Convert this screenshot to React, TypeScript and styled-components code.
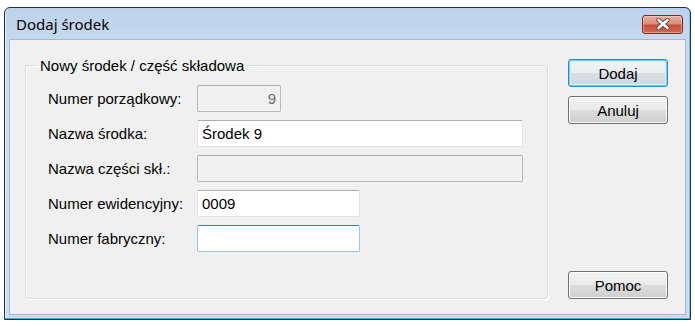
import React from 'react';
import styled, { createGlobalStyle, css } from 'styled-components';

const Global = createGlobalStyle`
  html, body { margin: 0; padding: 0; background: #ffffff; }
  body { font-family: "Liberation Sans", Arial, sans-serif; }
  * { box-sizing: border-box; }
`;

const Page = styled.div`
  width: 695px;
  height: 326px;
  padding: 7px 0 0 4px;
`;

const Window = styled.div`
  width: 687px;
  height: 313px;
  border: 1px solid #26303a;
  border-radius: 6px 6px 0 0;
  background: linear-gradient(#bcd2ec, #c8dbf0 40px, #c9dcf1);
  box-shadow: inset 0 -1px 0 #4aa6e3, inset -1px 0 0 #7fc0ea, inset 1px 0 0 #e4eefa;
  padding: 0 4px 4px;
  display: flex;
  flex-direction: column;
`;

const TitleBar = styled.div`
  height: 31px;
  display: flex;
  align-items: center;
  padding: 0 3px 0 7px;
`;

const Title = styled.div`
  flex: 1;
  font-family: "Noto Sans", "Open Sans", sans-serif;
  font-size: 15px;
  color: #000;
  padding-top: 1px;
`;

const CloseButton = styled.button`
  width: 41px;
  height: 19px;
  margin-top: 1px;
  padding: 0;
  border: 1px solid #7c2a20;
  border-radius: 3px;
  background: linear-gradient(#eab0a3 0%, #dc8e7c 45%, #c9503c 55%, #cf6a52 100%);
  box-shadow: inset 0 0 0 1px rgba(255, 220, 210, 0.45);
  display: flex;
  align-items: center;
  justify-content: center;
`;

const Content = styled.div`
  flex: 1;
  background: #f0f0f0;
  border: 1px solid #a4b9d2;
  padding: 19px 16px 15px 15px;
  display: flex;
  gap: 20px;
`;

const Group = styled.fieldset`
  width: 523px;
  margin: -2px 0 0 0;
  padding: 0;
  border: 1px solid #d5dfe5;
  border-radius: 3px;
  box-shadow: inset 1px 1px 0 #ffffff, 1px 1px 0 #ffffff;
  min-width: 0;
`;

const Caption = styled.legend`
  margin-left: 11px;
  padding: 0 3px;
  font-size: 15px;
  line-height: 17px;
  color: #000;
`;

const Form = styled.div`
  display: grid;
  grid-template-columns: 149px 1fr;
  grid-auto-rows: 27px;
  row-gap: 8px;
  align-items: center;
  padding: 11px 24px 0 22px;
`;

const Label = styled.label`
  font-size: 15px;
  color: #000;
  white-space: nowrap;
`;

type FieldState = 'normal' | 'disabled' | 'focused';

const Field = styled.input<{ $w: number; $state: FieldState; $right?: boolean }>`
  width: ${(p) => p.$w}px;
  height: 27px;
  margin: 0;
  padding: 0 4px;
  font-family: "Liberation Sans", Arial, sans-serif;
  font-size: 15px;
  color: #000;
  text-align: ${(p) => (p.$right ? 'right' : 'left')};
  outline: none;
  border-radius: 2px;
  background: #ffffff;
  border: 1px solid #e2e3ea;
  border-top-color: #abadb3;
  ${(p) =>
    p.$state === 'disabled' &&
    css`
      background: #f0f0f0;
      border: 1px solid #b5b7ba;
      border-top-color: #a9abae;
      color: #6d6d6d;
      -webkit-text-fill-color: #6d6d6d;
      opacity: 1;
    `}
  ${(p) =>
    p.$state === 'focused' &&
    css`
      border: 1px solid #9fc6ea;
      border-top-color: #3d7bbf;
    `}
`;

const Buttons = styled.div`
  width: 100px;
  display: flex;
  flex-direction: column;
  gap: 9px;
`;

const Button = styled.button<{ $default?: boolean; $bottom?: boolean }>`
  width: 100px;
  height: 28px;
  padding: 0;
  font-family: "Liberation Sans", Arial, sans-serif;
  font-size: 15px;
  color: #000;
  border: 1px solid #707070;
  border-radius: 3px;
  background: linear-gradient(#f2f2f2 0%, #ebebeb 48%, #dddddd 52%, #cfcfcf 100%);
  box-shadow: inset 0 0 0 1px #fcfcfc;
  ${(p) => p.$bottom && css`margin-top: auto;`}
  ${(p) =>
    p.$default &&
    css`
      border-color: #2c8ad6;
      box-shadow: inset 0 0 0 1px #6fd0f6, inset 0 0 0 2px #d8f1fc;
      background: linear-gradient(#f1f4f6 0%, #e9eef1 48%, #d9e0e5 52%, #cfd7dc 100%);
    `}
`;

const CloseIcon = () => (
  <svg width="16" height="12" viewBox="0 0 16 12">
    <path
      d="M3.5 2 L12.5 10 M12.5 2 L3.5 10"
      stroke="#6b3f38"
      strokeWidth="4.4"
      strokeLinecap="round"
      fill="none"
    />
    <path
      d="M3.5 2 L12.5 10 M12.5 2 L3.5 10"
      stroke="#ffffff"
      strokeWidth="2.6"
      strokeLinecap="round"
      fill="none"
    />
  </svg>
);

export default function App() {
  return (
    <>
      <Global />
      <Page>
        <Window>
          <TitleBar>
            <Title>Dodaj środek</Title>
            <CloseButton aria-label="Zamknij">
              <CloseIcon />
            </CloseButton>
          </TitleBar>
          <Content>
            <Group>
              <Caption>Nowy środek / część składowa</Caption>
              <Form>
                <Label>Numer porządkowy:</Label>
                <Field $w={84} $state="disabled" $right disabled value="9" readOnly />
                <Label>Nazwa środka:</Label>
                <Field $w={326} $state="normal" value="Środek 9" readOnly />
                <Label>Nazwa części skł.:</Label>
                <Field $w={326} $state="disabled" disabled value="" readOnly />
                <Label>Numer ewidencyjny:</Label>
                <Field $w={163} $state="normal" value="0009" readOnly />
                <Label>Numer fabryczny:</Label>
                <Field $w={163} $state="focused" value="" readOnly />
              </Form>
            </Group>
            <Buttons>
              <Button $default>Dodaj</Button>
              <Button>Anuluj</Button>
              <Button $bottom>Pomoc</Button>
            </Buttons>
          </Content>
        </Window>
      </Page>
    </>
  );
}
